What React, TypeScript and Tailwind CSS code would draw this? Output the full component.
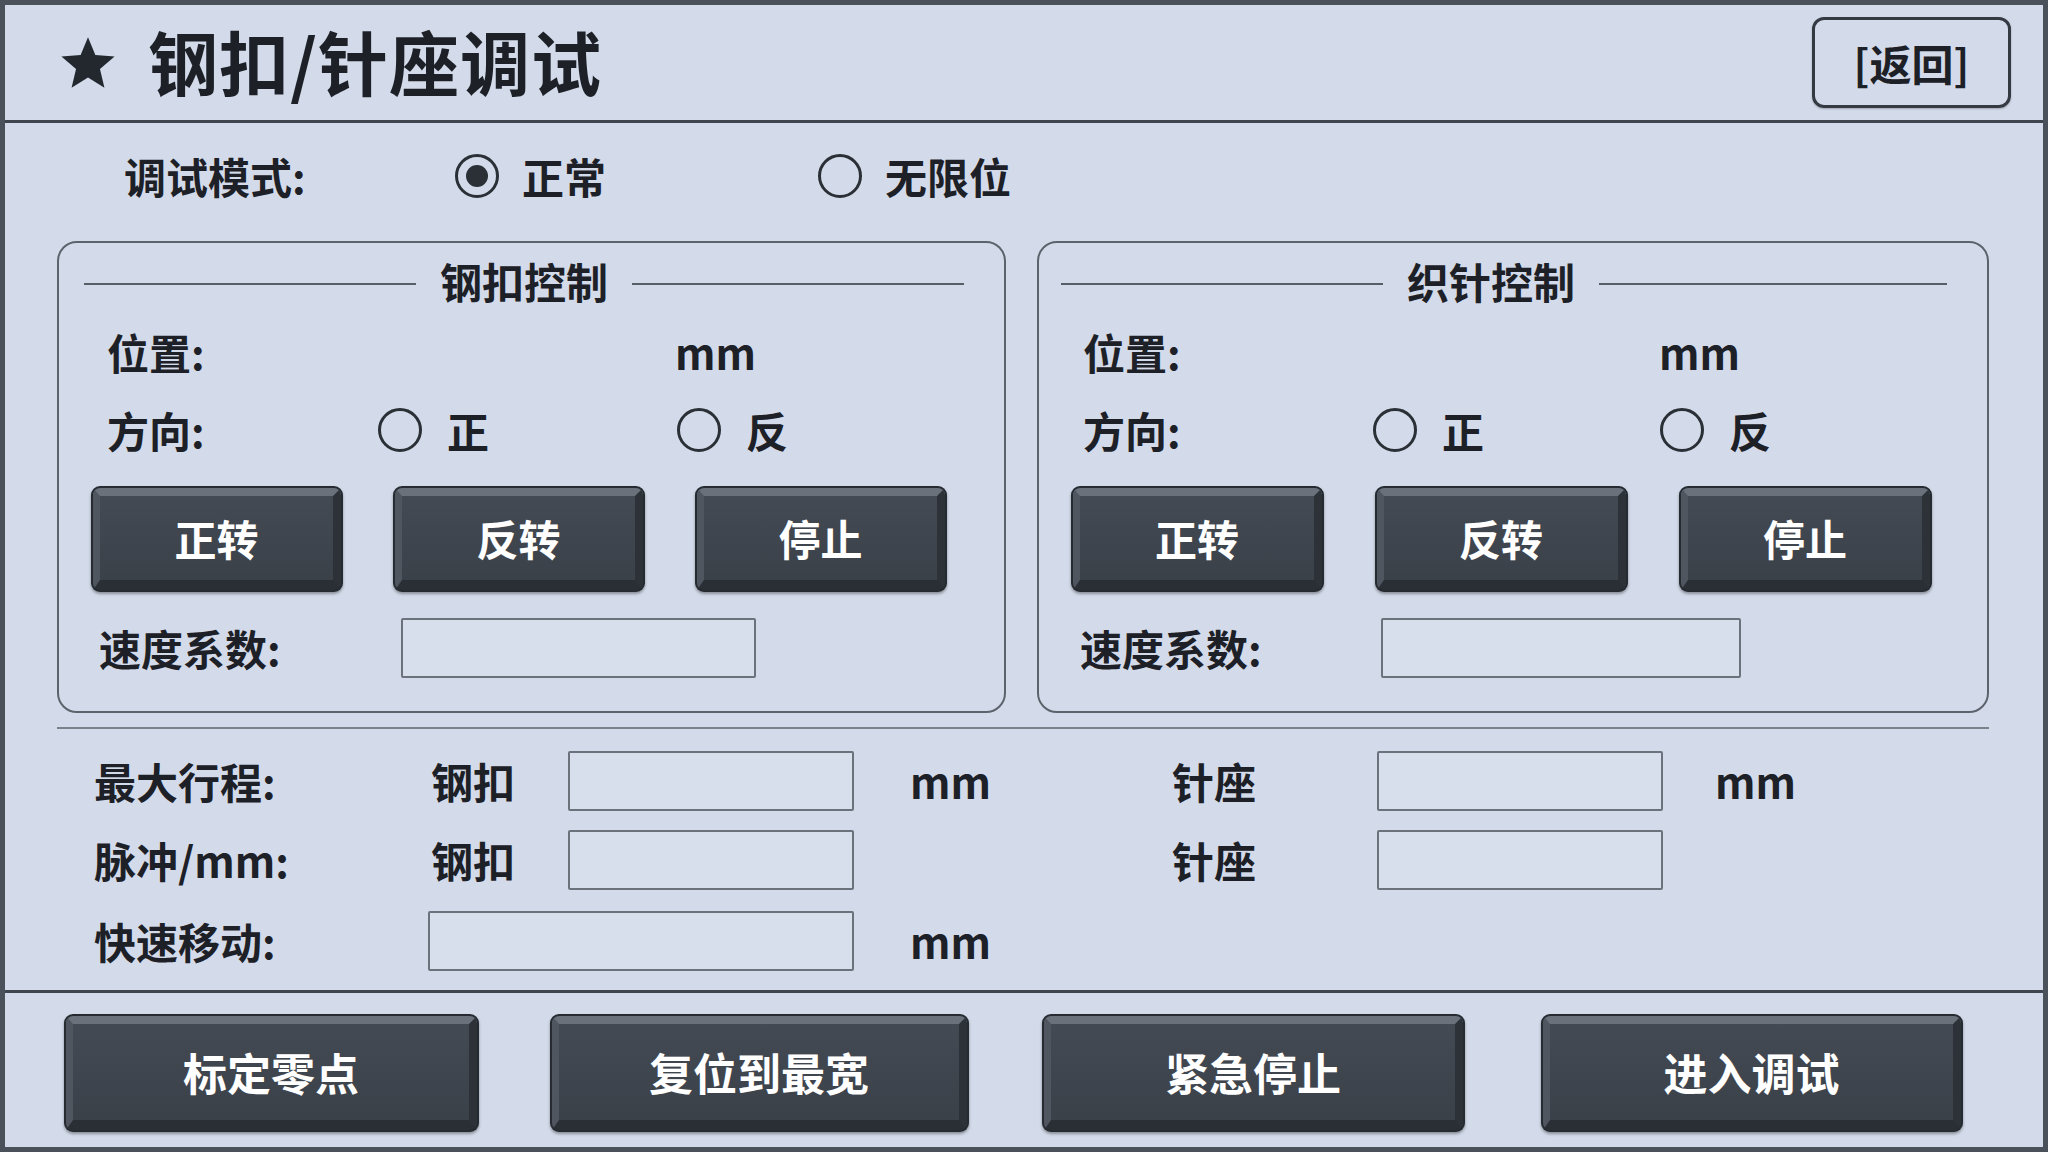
import React from "react";

const FONT = "font-['Noto_Sans_CJK_SC','Noto_Sans',sans-serif]";

function Radio({ checked = false }: { checked?: boolean }) {
  return (
    <span className="w-[44px] h-[44px] rounded-full border-[3px] border-[#2b2f36] flex items-center justify-center shrink-0">
      {checked && <span className="w-[22px] h-[22px] rounded-full bg-[#2b2f36]" />}
    </span>
  );
}

function DarkButton({ label, w, h, size = "text-[42px]" }: { label: string; w: string; h: string; size?: string }) {
  return (
    <div className={`${w} ${h} shrink-0 rounded-[9px] bg-[#262a31] p-[2px] shadow-[0_2px_3px_rgba(0,0,0,0.35)]`}>
      <div
        className={`w-full h-full rounded-[7px] border-t-[8px] border-l-[7px] border-r-[8px] border-b-[10px] border-t-[#6a717b] border-l-[#50565f] border-r-[#2d3239] border-b-[#2a2e35] bg-[linear-gradient(#444a53,#3b4149)] flex items-center justify-center text-white font-bold ${size} leading-none`}
      >
        {label}
      </div>
    </div>
  );
}

function Input({ w }: { w: string }) {
  return <div className={`${w} h-[60px] shrink-0 rounded-[2px] border-[2px] border-[#6c727c] bg-[#d7deec]`} />;
}

type GroupCfg = {
  title: string;
  w: string;
  leftLineW: string;
  posPl: string;
  posLabelW: string;
  dirPl: string;
  dirLabelW: string;
  radioGroupW: string;
  btnW: string;
  btnGap: string;
  spdPl: string;
  spdLabelW: string;
  inputW: string;
  titlePl: string;
};

function Group(c: GroupCfg) {
  return (
    <div className={`${c.w} h-[472px] shrink-0 rounded-[20px] border-[2px] border-[#5d636c] flex flex-col`}>
      <div className={`mt-[14px] h-[48px] flex items-center ${c.titlePl} pr-[40px]`}>
        <div className={`${c.leftLineW} shrink-0 h-[2px] mt-[6px] bg-[#575d66]`} />
        <span className="mx-[24px] text-[42px] font-bold leading-none">{c.title}</span>
        <div className="flex-1 h-[2px] mt-[6px] bg-[#575d66]" />
      </div>
      <div className={`mt-[21px] h-[52px] flex items-center ${c.posPl}`}>
        <span className={`${c.posLabelW} shrink-0`}>位置:</span>
        <span>mm</span>
      </div>
      <div className={`mt-[26px] h-[52px] flex items-center ${c.dirPl}`}>
        <span className={`${c.dirLabelW} shrink-0`}>方向:</span>
        <span className={`${c.radioGroupW} shrink-0 flex items-center gap-[25px]`}>
          <Radio />
          <span>正</span>
        </span>
        <span className="flex items-center gap-[25px]">
          <Radio />
          <span>反</span>
        </span>
      </div>
      <div className={`mt-[30px] flex pl-[32px] ${c.btnGap}`}>
        <DarkButton label="正转" w={c.btnW} h="h-[106px]" />
        <DarkButton label="反转" w={c.btnW} h="h-[106px]" />
        <DarkButton label="停止" w={c.btnW} h="h-[106px]" />
      </div>
      <div className={`mt-[26px] flex items-center ${c.spdPl}`}>
        <span className={`${c.spdLabelW} shrink-0`}>速度系数:</span>
        <Input w={c.inputW} />
      </div>
    </div>
  );
}

export default function App() {
  return (
    <div
      className={`w-[2048px] h-[1152px] overflow-hidden bg-[#d3dbea] border-[5px] border-[#4b515b] flex flex-col text-[#1d2127] font-bold text-[42px] leading-none ${FONT}`}
    >
      {/* Header */}
      <div className="h-[118px] shrink-0 border-b-[3px] border-[#3f454e] flex items-center pl-[54px] pr-[32px]">
        <svg width="58" height="56" viewBox="0 0 24 23" className="shrink-0">
          <path
            d="M12 0.8l3.05 7.35 7.95.62-6.05 5.2 1.85 7.75L12 17.55 5.2 21.72l1.85-7.75L1 8.77l7.95-.62z"
            fill="#23272e"
          />
        </svg>
        <span className="ml-[31px] text-[70px] font-bold tracking-[1px] pb-[4px]">钢扣/针座调试</span>
        <div className="ml-auto w-[199px] h-[91px] rounded-[12px] border-[3px] border-[#353a42] flex items-center justify-center text-[42px] font-bold shadow-[0_1px_2px_rgba(0,0,0,0.25)]">
          [返回]
        </div>
      </div>

      {/* Mode row */}
      <div className="h-[106px] shrink-0 flex items-center pl-[119px]">
        <span className="w-[331px] shrink-0">调试模式:</span>
        <span className="w-[363px] shrink-0 flex items-center gap-[23px]">
          <Radio checked />
          <span>正常</span>
        </span>
        <span className="flex items-center gap-[23px]">
          <Radio />
          <span>无限位</span>
        </span>
      </div>

      {/* Groups */}
      <div className="mt-[12px] flex pl-[52px] gap-[31px]">
        <Group
          title="钢扣控制"
          w="w-[949px]"
          leftLineW="w-[332px]"
          titlePl="pl-[25px]"
          posPl="pl-[48px]"
          posLabelW="w-[568px]"
          dirPl="pl-[48px]"
          dirLabelW="w-[271px]"
          radioGroupW="w-[299px]"
          btnW="w-[252px]"
          btnGap="gap-[50px]"
          spdPl="pl-[40px]"
          spdLabelW="w-[302px]"
          inputW="w-[355px]"
        />
        <Group
          title="织针控制"
          w="w-[952px]"
          leftLineW="w-[322px]"
          titlePl="pl-[22px]"
          posPl="pl-[44px]"
          posLabelW="w-[576px]"
          dirPl="pl-[44px]"
          dirLabelW="w-[290px]"
          radioGroupW="w-[287px]"
          btnW="w-[253px]"
          btnGap="gap-[51px]"
          spdPl="pl-[41px]"
          spdLabelW="w-[301px]"
          inputW="w-[360px]"
        />
      </div>

      {/* Separator */}
      <div className="mt-[14px] ml-[52px] w-[1932px] h-[2px] bg-[#7b818b] shrink-0" />

      {/* Parameter rows */}
      <div className="mt-[22px] h-[60px] flex items-center pl-[89px] shrink-0">
        <span className="w-[337px] shrink-0">最大行程:</span>
        <span className="w-[137px] shrink-0">钢扣</span>
        <Input w="w-[286px]" />
        <span className="ml-[56px] w-[262px] shrink-0">mm</span>
        <span className="w-[205px] shrink-0">针座</span>
        <Input w="w-[286px]" />
        <span className="ml-[52px]">mm</span>
      </div>
      <div className="mt-[19px] h-[60px] flex items-center pl-[89px] shrink-0">
        <span className="w-[337px] shrink-0">脉冲/mm:</span>
        <span className="w-[137px] shrink-0">钢扣</span>
        <Input w="w-[286px]" />
        <span className="ml-[56px] w-[262px] shrink-0" />
        <span className="w-[205px] shrink-0">针座</span>
        <Input w="w-[286px]" />
      </div>
      <div className="mt-[21px] h-[60px] flex items-center pl-[89px] shrink-0">
        <span className="w-[334px] shrink-0">快速移动:</span>
        <Input w="w-[426px]" />
        <span className="ml-[56px]">mm</span>
      </div>

      {/* Bottom bar */}
      <div className="mt-[19px] flex-1 border-t-[3px] border-[#40464f] flex items-start pt-[21px] pl-[59px]">
        <DarkButton label="标定零点" w="w-[415px]" h="h-[118px]" size="text-[44px]" />
        <div className="ml-[71px]">
          <DarkButton label="复位到最宽" w="w-[419px]" h="h-[118px]" size="text-[44px]" />
        </div>
        <div className="ml-[73px]">
          <DarkButton label="紧急停止" w="w-[423px]" h="h-[118px]" size="text-[44px]" />
        </div>
        <div className="ml-[76px]">
          <DarkButton label="进入调试" w="w-[422px]" h="h-[118px]" size="text-[44px]" />
        </div>
      </div>
    </div>
  );
}
